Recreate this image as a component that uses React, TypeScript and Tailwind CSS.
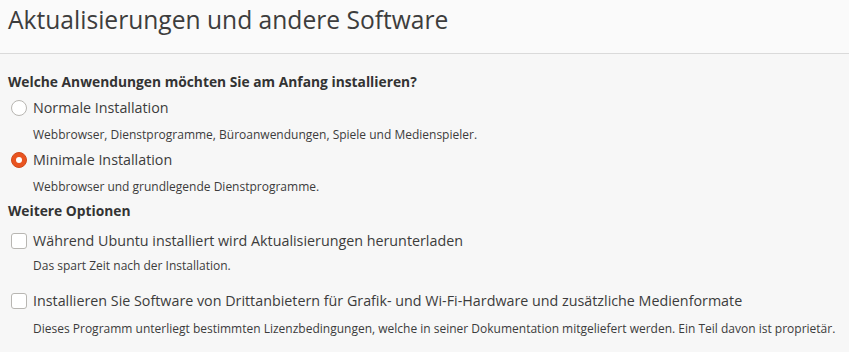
import { useState } from "react";

const font = { fontFamily: '"Open Sans", "Noto Sans", sans-serif' };

function Radio({ checked, onClick }: { checked: boolean; onClick: () => void }) {
    return (
        <button
            onClick={onClick}
            className={
                checked
                    ? "flex size-4 items-center justify-center rounded-full bg-[#e95420] border border-[#d04a1a]"
                    : "flex size-4 items-center justify-center rounded-full bg-white border border-[#b8b6b2]"
            }
        >
            {checked && <span className="size-[6px] rounded-full bg-white" />}
        </button>
    );
}

function Check({ checked, onClick }: { checked: boolean; onClick: () => void }) {
    return (
        <button
            onClick={onClick}
            className={
                checked
                    ? "flex size-4 items-center justify-center rounded-[3px] bg-[#e95420] border border-[#d04a1a] text-white text-[11px]"
                    : "flex size-4 items-center justify-center rounded-[3px] bg-white border border-[#b8b6b2]"
            }
        >
            {checked && "✓"}
        </button>
    );
}

export default function App() {
    const [mode, setMode] = useState("minimal");
    const [updates, setUpdates] = useState(false);
    const [thirdParty, setThirdParty] = useState(false);

    return (
        <div className="w-[849px] h-[352px] bg-[#f7f7f7] text-[#3c3c3c] overflow-hidden" style={font}>
            <div className="h-[53px] px-2 flex items-center bg-[#fafafa] border-b border-[#dadada] box-content">
                <h1 className="text-[24.6px] leading-none text-[#3d3d3d] -mt-[12px]">Aktualisierungen und andere Software</h1>
            </div>

            <div className="px-2 flex flex-col">
                <div className="mt-[18px] h-5 flex items-center text-[13.8px] font-bold text-[#333]">
                    Welche Anwendungen möchten Sie am Anfang installieren?
                </div>

                <label className="mt-1 h-6 flex items-center gap-[6px] pl-[3px] text-[14.3px]">
                    <Radio checked={mode === "normal"} onClick={() => setMode("normal")} />
                    <span>Normale Installation</span>
                </label>
                <div className="mt-[6px] h-[18px] flex items-center pl-[25px] text-[12px]">
                    Webbrowser, Dienstprogramme, Büroanwendungen, Spiele und Medienspieler.
                </div>

                <label className="mt-[4px] h-6 flex items-center gap-[6px] pl-[3px] text-[14.3px]">
                    <Radio checked={mode === "minimal"} onClick={() => setMode("minimal")} />
                    <span>Minimale Installation</span>
                </label>
                <div className="mt-[6px] h-[18px] flex items-center pl-[25px] text-[12px]">
                    Webbrowser und grundlegende Dienstprogramme.
                </div>

                <div className="mt-[5px] h-5 flex items-center text-[13.8px] font-bold text-[#333]">Weitere Optionen</div>

                <label className="mt-2 h-6 flex items-center gap-[6px] pl-[3px] text-[14.3px]">
                    <Check checked={updates} onClick={() => setUpdates(!updates)} />
                    <span>Während Ubuntu installiert wird Aktualisierungen herunterladen</span>
                </label>
                <div className="mt-[4px] h-[18px] flex items-center pl-[25px] text-[12px]">
                    Das spart Zeit nach der Installation.
                </div>

                <label className="mt-[14px] h-6 flex items-center gap-[6px] pl-[3px] text-[14.3px]">
                    <Check checked={thirdParty} onClick={() => setThirdParty(!thirdParty)} />
                    <span>Installieren Sie Software von Drittanbietern für Grafik- und Wi-Fi-Hardware und zusätzliche Medienformate</span>
                </label>
                <div className="mt-[7px] h-[18px] flex items-center pl-[25px] text-[12px]">
                    Dieses Programm unterliegt bestimmten Lizenzbedingungen, welche in seiner Dokumentation mitgeliefert werden. Ein Teil davon ist proprietär.
                </div>
            </div>
        </div>
    );
}
